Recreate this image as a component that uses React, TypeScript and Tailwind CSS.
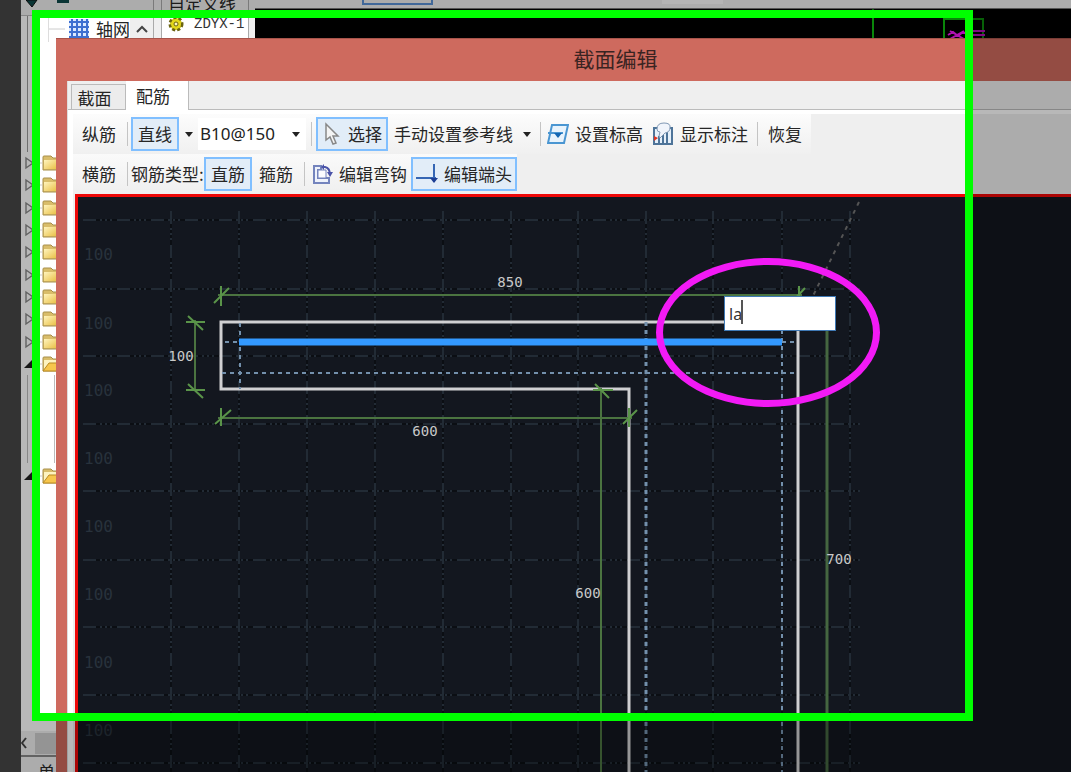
import type { ReactNode } from "react";
import clsx from "clsx";

const columns = [171, 239, 307, 375, 443, 511, 578, 646, 713, 782, 850];
const rows = [220, 289, 356, 424, 491, 560, 627, 695, 763];
const rowLabels = [254, 323, 390, 458, 526, 594, 662, 730];
const closedFolders = ["f1", "f2", "f3", "f4", "f5", "f6", "f7", "f8", "f9"];

function Separator({ className }: { className?: string }) {
  return <span className={clsx("h-6 w-px shrink-0 bg-[#c4c4c4]", className)} />;
}

function Caret() {
  return (
    <svg width="8" height="5" viewBox="0 0 8 5" aria-hidden="true">
      <path d="M0 0h8L4 5z" fill="#222" />
    </svg>
  );
}

function ToolButton({
  active,
  className,
  children,
}: {
  active?: boolean;
  className?: string;
  children: ReactNode;
}) {
  return (
    <button
      type="button"
      className={clsx(
        "flex h-[34px] shrink-0 items-center justify-center gap-[6px] whitespace-nowrap",
        active && "border-2 border-[#80bfff] bg-[#e2edf8]",
        className,
      )}
    >
      {children}
    </button>
  );
}

function Folder({ open }: { open?: boolean }) {
  return (
    <div className="flex items-center">
      <svg width="35" height="18" viewBox="0 0 35 18" aria-hidden="true">
        {open ? (
          <path d="M3 13L12 4v9z" fill="#222" />
        ) : (
          <path d="M5 4v10l7-5z" fill="none" stroke="#888" strokeWidth="1.4" />
        )}
        <path d="M17 9h4" stroke="#ccc" />
        <path d="M22 3q0-1 1-1h7l2 2h6v12H22z" fill="#d9bd6a" stroke="#a88f4a" />
        {open ? (
          <>
            <path d="M23 5h12v11H23z" fill="#fdf3c0" />
            <path d="M22 16l6-8h8v8z" fill="#f7c64c" stroke="#b98a22" />
          </>
        ) : (
          <path d="M23 6h13v9H23z" fill="url(#folderFace)" />
        )}
      </svg>
    </div>
  );
}

function MainWindow() {
  return (
    <div className="flex h-full bg-[#efefef]">
      <svg width="0" height="0" className="absolute" aria-hidden="true">
        <linearGradient id="folderFace" x1="0" y1="0" x2="1" y2="1">
          <stop offset="0" stopColor="#fff4bd" />
          <stop offset="1" stopColor="#e9bf45" />
        </linearGradient>
      </svg>

      <aside className="flex w-[133px] shrink-0 flex-col border-r border-[#aaa]">
        <div className="h-4 border-b border-[#bbb] pl-[5px]">
          <svg width="60" height="8" viewBox="0 0 60 8" aria-hidden="true">
            <path d="M0 0h11L6 7z" fill="#0f4a4a" stroke="#111" />
            <path d="M31 0h12v3H31z" fill="#0f4a4a" />
          </svg>
        </div>
        <div className="flex h-[136px] justify-end bg-white">
          <div className="mr-auto ml-[6px] w-px bg-[#999]" />
          <div className="flex h-[26px] w-[105px] items-center border-l border-[#ddd]">
            <svg width="20" height="2" className="shrink-0" aria-hidden="true">
              <path d="M0 1h16" stroke="#ccc" />
            </svg>
            <svg width="20" height="20" viewBox="0 0 20 20" className="shrink-0" aria-hidden="true">
              <path d="M0 0h20v20H0z" fill="#dbe9ff" />
              <path d="M3 0v20M8 0v20M13 0v20M18 0v20M0 3h20M0 8h20M0 13h20M0 18h20" stroke="#3d6fd0" strokeWidth="2" />
            </svg>
            <span className="ml-[7px] w-[34px] whitespace-nowrap">轴网</span>
            <span className="flex h-full flex-1 items-center justify-center bg-[#efefef]">
              <svg width="12" height="10" viewBox="0 0 12 10" aria-hidden="true">
                <path d="M1 8l5-5 5 5" fill="none" stroke="#444" strokeWidth="2" />
              </svg>
            </span>
          </div>
        </div>
        <div className="grid h-[223px] auto-rows-fr items-center bg-white">
          {closedFolders.map((id) => (
            <Folder key={id} />
          ))}
          <Folder open />
        </div>
        <div className="h-[92px] bg-white pl-[6px]">
          <div className="h-[88px] w-[28px] border-x border-[#bbb]" />
        </div>
        <div className="bg-white">
          <Folder open />
        </div>
        <div className="min-h-0 flex-1 bg-white" />
        <div className="flex h-[24px] items-center bg-[#efefef]">
          <svg width="14" height="12" viewBox="0 0 14 12" aria-hidden="true">
            <path d="M5 1L1 6l4 5" fill="none" stroke="#444" strokeWidth="2" />
          </svg>
          <span className="h-[21px] w-20 bg-[#cdcdcd]" />
        </div>
        <div className="h-[17px] border-t-2 border-[#888] pt-[5px] pl-[17px]">单</div>
      </aside>

      <aside className="ml-[7px] flex w-[88px] shrink-0 flex-col border-x border-[#aaa] bg-white">
        <div className="flex h-4 items-start bg-[#efefef] pl-[6px]">
          <span className="flex h-[7px] items-center whitespace-nowrap">自定义线</span>
        </div>
        <div className="flex h-4 items-center gap-[10px] pl-[6px]">
          <svg width="16" height="16" viewBox="0 0 16 16" aria-hidden="true">
            <circle cx="8" cy="8" r="6" fill="#d8cc18" stroke="#6b6410" strokeWidth="3" strokeDasharray="3 2" />
            <circle cx="8" cy="8" r="5" fill="#e3d81c" />
            <circle cx="8" cy="8" r="2" fill="#fff9c0" stroke="#6b6410" />
          </svg>
          <span className="font-['Liberation_Mono',monospace] text-sm whitespace-nowrap text-[#333]">ZDYX-1</span>
        </div>
      </aside>

      <main className="ml-[6px] flex min-w-0 flex-1 flex-col">
        <div className="flex h-[9px] items-start border-b border-[#777]">
          <span className="ml-[107px] h-[5px] w-[71px] border-2 border-t-0 border-[#5a91d5]" />
          <span className="ml-[229px] h-1 w-[61px] bg-[#fafafa]" />
        </div>
        <div className="flex-1 bg-black">
          <svg width="816" height="30" viewBox="255 9 816 30" aria-hidden="true">
            <path d="M873 9v30M944 39V19h39v20" fill="none" stroke="#0a860a" strokeWidth="2" />
            <path d="M948 35l5-3 5 4 5-4 5 3M950 31l14 8M964 31l-14 8M973 31h12M973 35h12" stroke="#b010b0" strokeWidth="2" fill="none" />
          </svg>
        </div>
      </main>
    </div>
  );
}

function RebarToolbar() {
  return (
    <div className="flex h-10 w-fit items-center bg-linear-to-b from-[#fcfcfc] to-[#f0f0f0] pr-[9px] pl-[9px]">
      <span className="w-[45px] shrink-0">纵筋</span>
      <Separator className="mr-[3px]" />
      <ToolButton active className="w-12">直线</ToolButton>
      <button type="button" aria-label="直线选项" className="flex h-8 w-[19px] items-center justify-center">
        <Caret />
      </button>
      <div className="flex h-8 w-[108px] items-center bg-white">
        <select
          aria-label="纵筋规格"
          className="h-8 w-[94px] appearance-none bg-transparent pl-[2px] font-['Noto_Sans',sans-serif] text-[17px] text-[#222]"
        >
          <option>B10@150</option>
        </select>
        <Caret />
      </div>
      <Separator className="mr-1 ml-[5px]" />
      <ToolButton active className="w-[72px]">
        <svg width="20" height="24" viewBox="0 0 20 24" aria-hidden="true">
          <path d="M4 2v16l4-3 3 7 3-1-3-7h5z" fill="#f4f4f4" stroke="#888" strokeWidth="1.5" />
        </svg>
        选择
      </ToolButton>
      <ToolButton className="ml-[6px]">手动设置参考线</ToolButton>
      <button type="button" aria-label="参考线选项" className="flex h-8 w-[27px] items-center justify-center">
        <Caret />
      </button>
      <Separator className="mr-[6px]" />
      <ToolButton>
        <svg width="22" height="22" viewBox="0 0 22 22" aria-hidden="true">
          <path d="M5 2h16l-4 18H1z" fill="#e8f3fc" stroke="#4a96d2" strokeWidth="2" />
          <path d="M1 10h15" stroke="#4a96d2" strokeWidth="2" />
          <path d="M7 10h8l-4 5z" fill="#1467b3" />
        </svg>
        设置标高
      </ToolButton>
      <ToolButton className="ml-[9px]">
        <svg width="22" height="24" viewBox="0 0 22 24" aria-hidden="true">
          <path d="M2 6h18v16H2z" fill="#e6f0fa" stroke="#4e7499" strokeWidth="2" />
          <path d="M7 14v8M11 12v10M15 9v13" stroke="#4e7499" strokeWidth="2" />
          <path d="M5 7q0-6 7-6t6 5q0 4-5 5l-5 5-1-2 1-4q-3 0-3-3z" fill="#f0f4fb" stroke="#8199b5" />
          <path d="M2 14l4 2-4 3z" fill="#dd3322" />
        </svg>
        显示标注
      </ToolButton>
      <Separator className="mr-[10px] ml-[9px]" />
      <ToolButton>恢复</ToolButton>
    </div>
  );
}

function StirrupToolbar() {
  return (
    <div className="flex h-10 w-fit items-center bg-linear-to-b from-[#fafafa] to-[#efefef] pl-[9px]">
      <span className="w-[45px] shrink-0">横筋</span>
      <Separator className="mr-[3px]" />
      <span className="w-[73px] whitespace-nowrap">钢筋类型:</span>
      <ToolButton active className="w-12">直筋</ToolButton>
      <ToolButton className="ml-[7px]">箍筋</ToolButton>
      <Separator className="mr-[7px] ml-[11px]" />
      <ToolButton>
        <svg width="21" height="22" viewBox="0 0 21 22" aria-hidden="true">
          <path d="M2 3h7v4H6v8h11v5H2z" fill="#eef2fb" stroke="#7484bd" strokeWidth="2" />
          <path d="M6 15V7h8v8z" fill="#fbfcff" stroke="#7484bd" strokeWidth="1" />
          <path d="M10 4h3q5 1 5 8" fill="none" stroke="#4a53a8" strokeWidth="2" />
          <path d="M15 9h6l-3 5zM12 1l-3 3 3 3" fill="#4a53a8" />
        </svg>
        编辑弯钩
      </ToolButton>
      <ToolButton active className="ml-1 w-[106px]">
        <svg width="22" height="20" viewBox="0 0 22 20" aria-hidden="true">
          <path d="M0 14h20M18 0v18" stroke="#3566b4" strokeWidth="2" />
          <path d="M14 14h8l-4 5z" fill="#1d3f94" />
        </svg>
        编辑端头
      </ToolButton>
    </div>
  );
}

function SectionDrawing() {
  return (
    <svg
      width="1100"
      height="575"
      viewBox="78 197 1100 575"
      className="block max-w-none"
      role="img"
      aria-label="截面配筋图"
    >
      <g stroke="#0b0e13" strokeWidth="2">
        {rows.map((y) => (
          <path key={y} d={`M83 ${y}H860`} />
        ))}
        {columns.map((x) => (
          <path key={x} d={`M${x} 211V772`} />
        ))}
      </g>
      <g stroke="#222b35" strokeWidth="2" strokeDasharray="13 4 2 3 2 3 2 5">
        {rows.map((y) => (
          <path key={y} d={`M83 ${y}H860`} />
        ))}
        {columns.map((x) => (
          <path key={x} d={`M${x} 211V772`} />
        ))}
      </g>
      <g fill="#28323c" fontFamily="DejaVu Sans Mono, monospace" fontSize="16">
        {rowLabels.map((y) => (
          <text key={y} x="84" y={y + 6}>
            100
          </text>
        ))}
      </g>

      <path d="M859 202L812 298" stroke="#555" strokeWidth="2" strokeDasharray="4 5" />

      {/* concrete outline */}
      <path d="M798 780V322H221V389H629V780" fill="none" stroke="#d0d0d2" strokeWidth="3" />

      {/* reference lines */}
      <g stroke="#7390ac" strokeWidth="2" strokeDasharray="4 4" fill="none">
        <path d="M240 323V389M225 342H239M782 342H798M222 373H798M782 322V772" />
        <path d="M646 322V772" strokeWidth="3" />
      </g>
      <path d="M239 342H782" stroke="#3399ff" strokeWidth="7" />

      {/* dimensions */}
      <g stroke="#4b7440" strokeWidth="2">
        <path d="M218 295H802M218 418H632M195 320V391M601 388V772" />
        <path d="M827 322V772" stroke="#456640" strokeWidth="3" />
      </g>
      <g stroke="#5a9449" strokeWidth="2">
        <path d="M221 286V306M214 303L229 288M799 286V306M792 302L805 288" />
        <path d="M221 408V426M215 424L231 410M629 408V427M623 424L637 410" />
        <path d="M186 322H205M188 316L203 330M186 390H205M188 384L203 398" />
        <path d="M593 390H613M595 384L609 398" />
      </g>
      <g fill="#c9c9c9" fontFamily="DejaVu Sans Mono, monospace" fontSize="14" textAnchor="middle">
        <text x="510" y="287">850</text>
        <text x="425" y="436">600</text>
        <text x="181" y="361">100</text>
        <text x="588" y="598">600</text>
        <text x="839" y="564">700</text>
      </g>
    </svg>
  );
}

function SectionEditor() {
  return (
    <section className="absolute top-[38px] -right-26 bottom-0 left-[35px] flex flex-col border-t border-[#a8544b] bg-[#ce6a5e] pl-[11px]">
      <h1 className="flex h-[42px] shrink-0 items-center justify-center pr-[11px] pb-1 text-[21px] text-[#3a2422]">
        截面编辑
      </h1>
      <div className="flex min-h-0 flex-1 flex-col border-l border-[#ddd] bg-[#efefef]">
        <div role="tablist" className="flex h-[29px] shrink-0 items-end border-b border-[#bbb] pl-[3px]">
          <button type="button" role="tab" aria-selected="false" className="h-[25px] w-[55px] border border-b-0 border-[#bbb] bg-[#ececec] pr-2 leading-[26px]">
            截面
          </button>
          <button type="button" role="tab" aria-selected="true" className="-mb-px h-[29px] w-[63px] border-r border-[#bbb] bg-white pr-2 leading-[28px]">
            配筋
          </button>
        </div>
        <div className="flex min-h-0 flex-1 flex-col border-t-4 border-l-5 border-white">
          <RebarToolbar />
          <StirrupToolbar />
          <div className="relative ml-[2px] min-h-0 flex-1 overflow-hidden border-t-3 border-l-3 border-[#ee0808] bg-[#13171f]">
            <SectionDrawing />
            <div className="absolute top-[99px] left-[646px] h-[35px] w-[112px]">
              <input
                aria-label="端头标注"
                defaultValue="la"
                className="h-full w-full border border-[#3f79b5] bg-white pl-1 font-['Noto_Sans',sans-serif] text-base text-[#333] outline-none"
              />
              <span className="absolute top-1 left-[17px] h-6 w-[2px] bg-[#555]" />
            </div>
          </div>
        </div>
      </div>
    </section>
  );
}

export default function App() {
  return (
    <div className="flex h-screen overflow-hidden bg-[#333] font-['Noto_Sans_CJK_SC',sans-serif] text-[17px] leading-5 text-[#262626]">
      <div className="w-[21px] shrink-0" />
      <div className="relative min-w-0 flex-1 overflow-hidden">
        <MainWindow />
        <SectionEditor />
        {/* capture frame dims everything outside of it */}
        <div className="pointer-events-none absolute top-[10px] left-[11px] h-[711px] w-[941px] border-8 border-[#00ff00] shadow-[0_0_0_2000px_rgba(0,0,0,0.28)]" />
        <div className="pointer-events-none absolute top-[258px] left-[635px] h-[149px] w-[224px] rounded-[50%] border-7 border-[#f21af5]" />
      </div>
    </div>
  );
}
